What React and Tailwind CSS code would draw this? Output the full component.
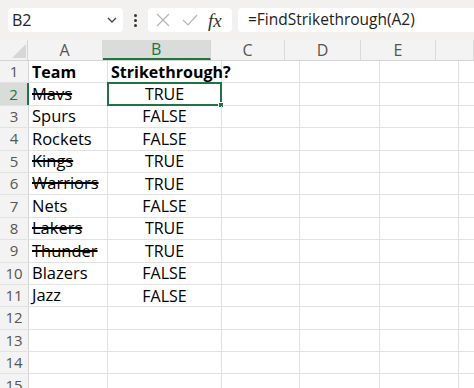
import React from "react";

const font = { fontFamily: '"Open Sans", "Noto Sans", sans-serif' };

const cols = [
  { key: "A", w: "w-[79px]" },
  { key: "B", w: "w-[114px]" },
  { key: "C", w: "w-[78px]" },
  { key: "D", w: "w-[80px]" },
  { key: "E", w: "w-[79px]" },
  { key: "F", w: "w-[40px]" },
];

const rows = [
  ["Team", "Strikethrough?", true, false],
  ["Mavs", "TRUE", false, true],
  ["Spurs", "FALSE", false, false],
  ["Rockets", "FALSE", false, false],
  ["Kings", "TRUE", false, true],
  ["Warriors", "TRUE", false, true],
  ["Nets", "FALSE", false, false],
  ["Lakers", "TRUE", false, true],
  ["Thunder", "TRUE", false, true],
  ["Blazers", "FALSE", false, false],
  ["Jazz", "FALSE", false, false],
  ["", "", false, false],
  ["", "", false, false],
  ["", "", false, false],
  ["", "", false, false],
];

export default function App() {
  return (
    <div className="w-[474px] h-[388px] overflow-hidden bg-white" style={font}>
      {/* formula bar */}
      <div className="h-[40px] bg-[#f2f1f0] flex items-center pl-[8px] gap-0">
        <div className="w-[115px] h-[24px] bg-white rounded-[4px] flex items-center justify-between pl-[4px] pr-[4px]">
          <span className="text-[16px] text-[#222] leading-none">B2</span>
          <svg width="12" height="8" viewBox="0 0 12 8" className="mr-[1px]">
            <path d="M2 2 L6 6 L10 2" fill="none" stroke="#444" strokeWidth="1.3" />
          </svg>
        </div>
        <div className="w-[25px] flex flex-col items-center justify-center gap-[2px]">
          <span className="w-[3px] h-[3px] rounded-full bg-[#333]"></span>
          <span className="w-[3px] h-[3px] rounded-full bg-[#333]"></span>
          <span className="w-[3px] h-[3px] rounded-full bg-[#333]"></span>
        </div>
        <div className="w-[84px] h-[24px] bg-white rounded-[4px] flex items-center pl-[6px]">
          <svg width="18" height="18" viewBox="0 0 18 18">
            <path d="M3 3 L15 15 M15 3 L3 15" stroke="#b5b5b5" strokeWidth="1.2" fill="none" />
          </svg>
          <svg width="18" height="18" viewBox="0 0 18 18" className="ml-[9px]">
            <path d="M2 9 L7 14 L16 4" stroke="#b5b5b5" strokeWidth="1.2" fill="none" />
          </svg>
          <span
            className="ml-[9px] text-[19px] italic text-[#333] leading-none"
            style={{ fontFamily: '"Liberation Serif", serif' }}
          >
            fx
          </span>
        </div>
        <div className="ml-[6px] flex-1 h-[24px] bg-white rounded-l-[4px] flex items-center pl-[10px]">
          <span className="text-[15.5px] text-[#222] leading-none">=FindStrikethrough(A2)</span>
        </div>
      </div>

      {/* column headers */}
      <div className="flex h-[21px] bg-[#f3f3f3] border-b border-[#d4d4d4]">
        <div className="w-[29px] h-full relative border-r border-[#d4d4d4]">
          <svg width="29" height="21" viewBox="0 0 29 21" className="absolute inset-0">
            <path d="M26 4 L26 18 L12 18 Z" fill="#d6d6d6" />
          </svg>
        </div>
        {cols.map((c) =>
          c.key === "B" ? (
            <div
              key={c.key}
              className={`${c.w} h-full bg-[#d9dcd9] border-b-2 border-[#217346] border-r border-r-[#d4d4d4] flex items-center justify-center text-[16px] text-[#217346] leading-none -mb-px`}
            >
              {c.key}
            </div>
          ) : (
            <div
              key={c.key}
              className={`${c.w} h-full border-r border-[#dadada] flex items-center justify-center text-[16px] text-[#555] leading-none`}
            >
              {c.key === "F" ? "" : c.key}
            </div>
          )
        )}
      </div>

      {/* rows */}
      {rows.map((r, i) => {
        const n = i + 1;
        const sel = n === 2;
        return (
          <div key={n} className="flex h-[22.4px] border-b border-[#e2e2e2]">
            <div
              className={`w-[29px] shrink-0 h-full flex items-center justify-center text-[15px] leading-none ${
                sel
                  ? "bg-[#d9dcd9] text-[#217346] border-r-2 border-[#217346]"
                  : "bg-[#f3f3f3] text-[#555] border-r border-[#d4d4d4]"
              }`}
            >
              {n}
            </div>
            <div className="w-[79px] shrink-0 h-full border-r border-[#e2e2e2] flex items-center pl-[3px] overflow-visible whitespace-nowrap">
              <span
                className={`text-[16.5px] leading-none text-black ${r[2] ? "font-bold text-[16px]" : ""} ${
                  r[3] ? "line-through decoration-[1.5px]" : ""
                }`}
              >
                {r[0]}
              </span>
            </div>
            <div
              className={`w-[114px] shrink-0 h-full flex items-center relative ${
                r[2] ? "justify-start pl-[3px]" : "justify-center"
              } border-r border-[#e2e2e2]`}
            >
              <span className={`text-[16px] leading-none text-black whitespace-nowrap ${r[2] ? "font-bold" : ""}`}>
                {r[1]}
              </span>
              {sel && (
                <div className="absolute -left-px -top-px w-[115px] h-[24px] border-2 border-[#217346] pointer-events-none">
                  <div className="absolute -right-[4px] -bottom-[4px] w-[6px] h-[6px] bg-[#217346] border border-white"></div>
                </div>
              )}
            </div>
            <div className="w-[78px] shrink-0 h-full border-r border-[#e2e2e2]"></div>
            <div className="w-[80px] shrink-0 h-full border-r border-[#e2e2e2]"></div>
            <div className="w-[79px] shrink-0 h-full border-r border-[#e2e2e2]"></div>
            <div className="w-[40px] shrink-0 h-full"></div>
          </div>
        );
      })}
    </div>
  );
}
